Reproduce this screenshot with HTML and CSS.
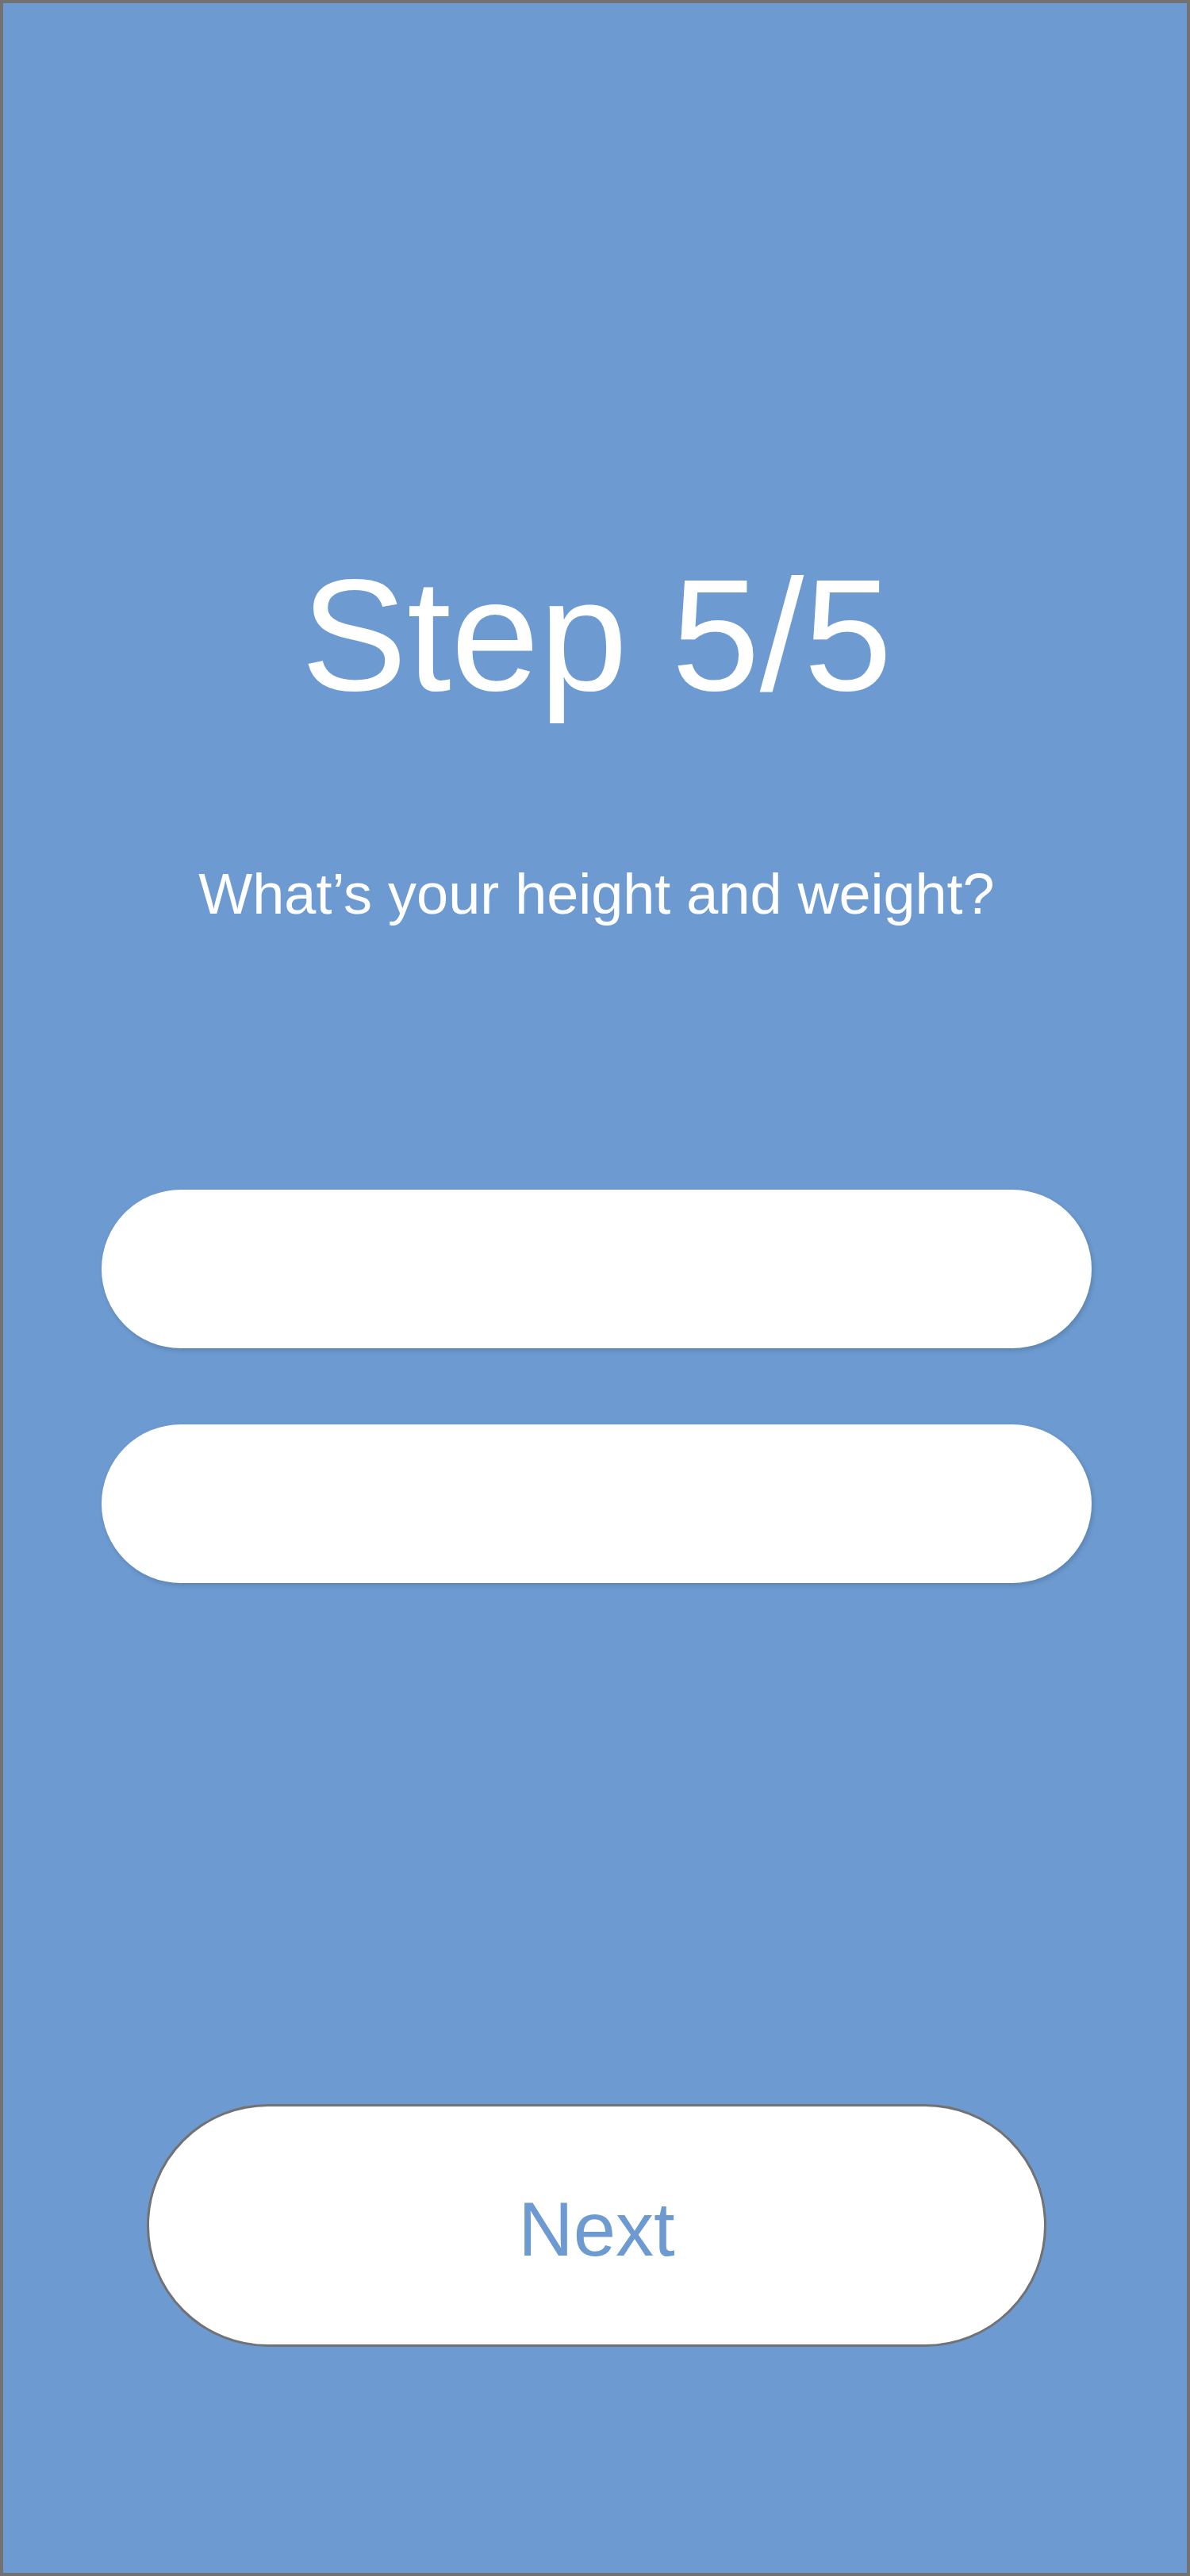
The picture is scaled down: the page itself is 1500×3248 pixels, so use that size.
FILE: index.html
```html
<!DOCTYPE html>
<html lang="en">
<head>
<meta charset="utf-8">
<title>Step 5/5</title>
<link rel="stylesheet" href="styles.css">
</head>
<body>
<main class="screen">
  <h1 class="title">Step 5/5</h1>
  <p class="subtitle">What’s your height and weight?</p>
  <form class="fields">
    <input class="field" type="text" aria-label="Height">
    <input class="field" type="text" aria-label="Weight">
  </form>
  <button class="next" type="button">Next</button>
</main>
</body>
</html>
```
FILE: styles.css
```css
html, body {
  margin: 0;
  padding: 0;
}

body {
  font-family: "Liberation Sans", Arial, Helvetica, sans-serif;
}

.screen {
  box-sizing: border-box;
  width: 1500px;
  height: 3248px;
  border: 4px solid #727272;
  background: #6d9bd1;
  display: flex;
  flex-direction: column;
  align-items: center;
  padding: 682px 0 0 4px;
}

.title {
  margin: 0;
  font-size: 200px;
  line-height: 230px;
  font-weight: 400;
  color: #ffffff;
}

.subtitle {
  margin: 170px 0 0;
  font-size: 72px;
  line-height: 83px;
  color: #ffffff;
}

.fields {
  margin: 331px 0 0;
  display: flex;
  flex-direction: column;
  gap: 96px;
}

.field {
  box-sizing: border-box;
  width: 1248px;
  height: 200px;
  border: none;
  border-radius: 100px;
  background: #ffffff;
  box-shadow: 2px 3px 6px rgba(0, 0, 0, 0.16);
  outline: none;
  padding: 0 100px;
  font-family: inherit;
  font-size: 64px;
}

.next {
  box-sizing: border-box;
  margin-top: 657px;
  width: 1134px;
  height: 306px;
  border: 3px solid #727272;
  border-radius: 153px;
  background: #ffffff;
  color: #6d9bd1;
  font-family: inherit;
  font-size: 96px;
  padding: 10px 0 0;
  display: flex;
  align-items: center;
  justify-content: center;
  cursor: pointer;
}
```
